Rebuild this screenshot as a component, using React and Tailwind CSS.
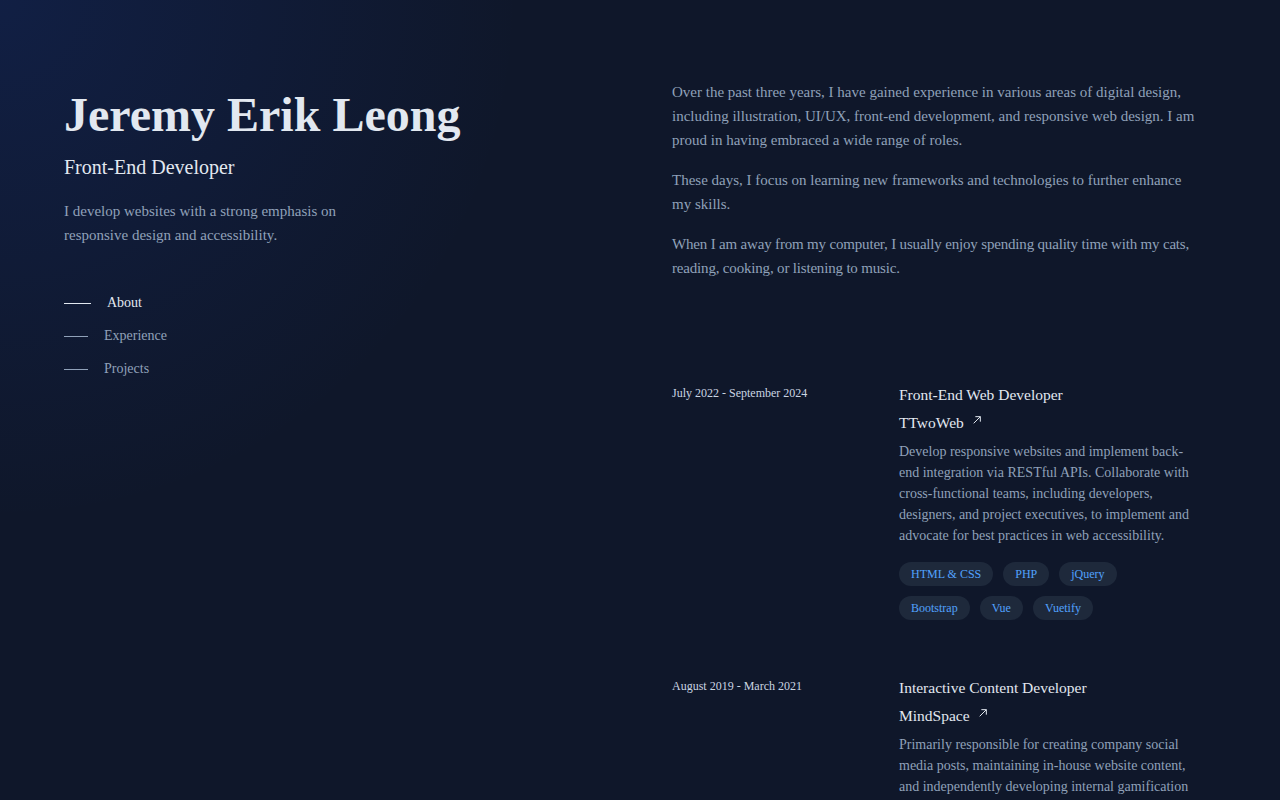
import React from 'react';

const jobs = [
  {
    range: 'July 2022 - September 2024',
    title: 'Front-End Web Developer',
    company: 'TTwoWeb',
    desc: 'Develop responsive websites and implement back-end integration via RESTful APIs. Collaborate with cross-functional teams, including developers, designers, and project executives, to implement and advocate for best practices in web accessibility.',
    tags: ['HTML & CSS', 'PHP', 'jQuery', 'Bootstrap', 'Vue', 'Vuetify'],
  },
  {
    range: 'August 2019 - March 2021',
    title: 'Interactive Content Developer',
    company: 'MindSpace',
    desc: 'Primarily responsible for creating company social media posts, maintaining in-house website content, and independently developing internal gamification projects and interactive training modules.',
    tags: ['JavaScript', 'HTML & CSS', 'WordPress'],
  },
];

const navItems = ['About', 'Experience', 'Projects'];

function ArrowIcon() {
  return (
    <svg viewBox="0 0 12 12" className="ml-2 h-[10px] w-[10px] -translate-y-[3px]" fill="none" stroke="currentColor" strokeWidth="1.2">
      <path d="M2 10 L10 2" />
      <path d="M4 2 H10 V8" />
    </svg>
  );
}

export default function App() {
  return (
    <div
      className="min-h-screen bg-[#0f172a] text-slate-400"
      style={{ fontFamily: '"Liberation Serif", "Times New Roman", serif' }}
    >
      <div className="min-h-screen bg-[radial-gradient(650px_at_0px_0px,rgba(29,78,216,0.15),transparent_80%)]">
        <div className="mx-auto flex max-w-screen-xl pl-16">
          {/* Header */}
          <header className="w-[608px] shrink-0 pt-[91px]">
            <h1 className="text-5xl leading-none font-bold text-slate-200">Jeremy Erik Leong</h1>
            <h2 className="mt-[14px] text-xl leading-7 text-slate-200">Front-End Developer</h2>
            <p className="mt-[18px] max-w-xs text-[15px] leading-6 text-slate-400">
              I develop websites with a strong emphasis on responsive design and accessibility.
            </p>
            <nav className="mt-[46px]">
              <ul className="flex flex-col gap-[13px]">
                {navItems.map((item, i) => (
                  <li key={item}>
                    <a href={'#' + item.toLowerCase()} className="flex h-5 items-center text-sm">
                      <span className={i === 0 ? 'mr-4 h-px w-[27px] bg-slate-200' : 'mr-4 h-px w-6 bg-slate-400'} />
                      <span className={i === 0 ? 'text-slate-200' : 'text-slate-400'}>{item}</span>
                    </a>
                  </li>
                ))}
              </ul>
            </nav>
          </header>

          {/* Main */}
          <main className="w-[528px] shrink-0 pt-20">
            <section className="space-y-4 text-[15px] leading-6">
              <p>
                Over the past three years, I have gained experience in various areas of digital design, including illustration, UI/UX, front-end development, and responsive web design. I am proud in having embraced a wide range of roles.
              </p>
              <p>
                These days, I focus on learning new frameworks and technologies to further enhance my skills.
              </p>
              <p className="tracking-[-0.012em]">
                When I am away from my computer, I usually enjoy spending quality time with my cats, reading, cooking, or listening to music.
              </p>
            </section>

            <section className="mt-[101px]">
              <ol className="flex flex-col gap-[54px]">
                {jobs.map((job) => (
                  <li key={job.company} className="flex gap-8">
                    <div className="mt-1 w-[195px] shrink-0 text-xs leading-4 text-slate-300">{job.range}</div>
                    <div className="w-[296px]">
                      <h3 className="text-[15.5px] leading-7 text-slate-200">{job.title}</h3>
                      <a href="#" className="flex items-center text-[15.5px] leading-7 text-slate-200">
                        {job.company}
                        <ArrowIcon />
                      </a>
                      <p className="mt-1 text-sm leading-[21px] text-slate-400">{job.desc}</p>
                      <ul className="mt-4 flex flex-wrap gap-2.5">
                        {job.tags.map((tag) => (
                          <li key={tag} className="flex h-6 items-center rounded-full bg-[#1e293b] px-3 text-xs text-blue-400">
                            {tag}
                          </li>
                        ))}
                      </ul>
                    </div>
                  </li>
                ))}
              </ol>
            </section>
          </main>
        </div>
      </div>
    </div>
  );
}
